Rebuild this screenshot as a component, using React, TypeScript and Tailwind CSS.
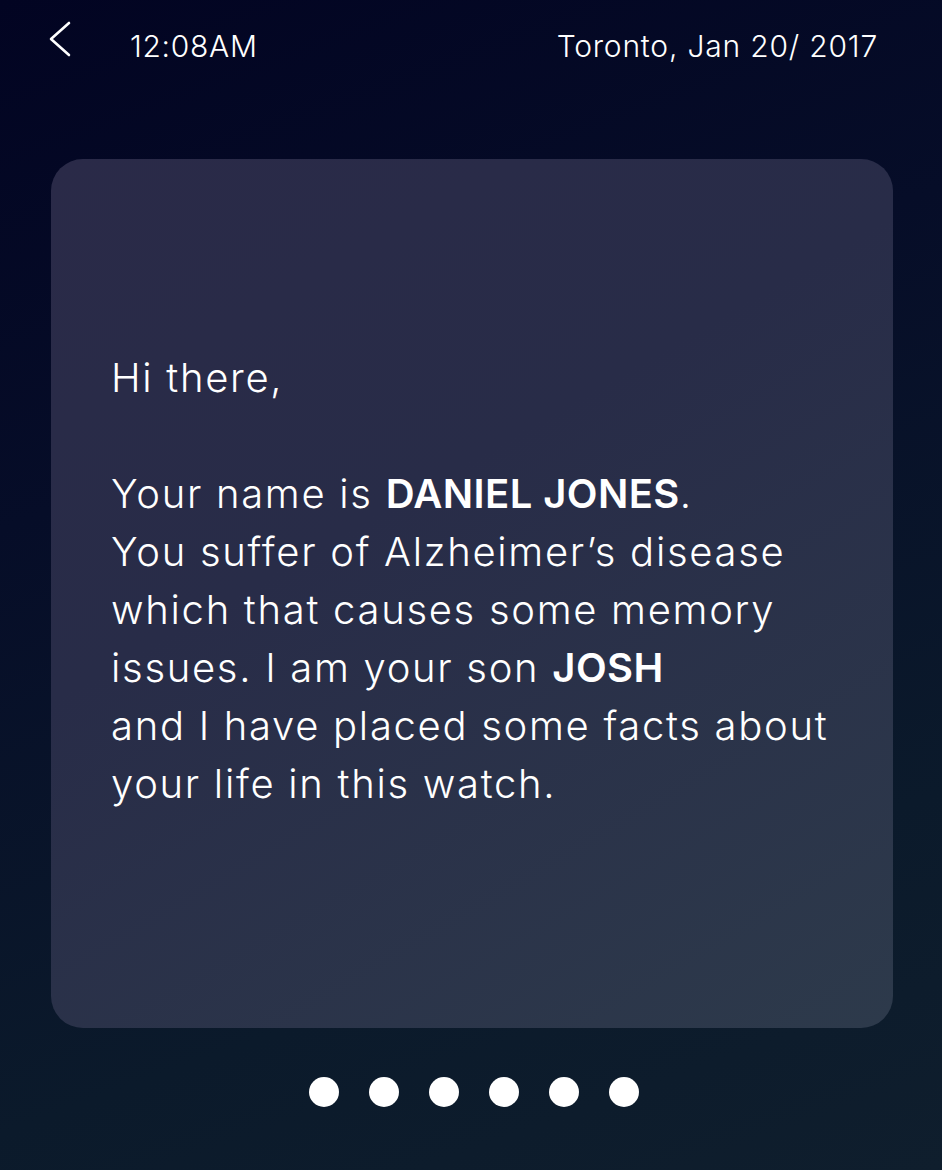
const DOTS = [0, 1, 2, 3, 4, 5];

export default function App() {
  return (
    <div className="flex h-[1170px] w-[942px] flex-col bg-[linear-gradient(160deg,#020422_0%,#060d28_35%,#0b1a2b_75%,#0f1e2d_100%)] font-['Inter',sans-serif] text-white">
      <header className="flex h-[90px] items-center pl-[48px] pr-[64px] pt-[2px]">
        <svg width="24" height="36" viewBox="0 0 24 36" className="-mt-[14px]" aria-hidden="true">
          <path d="M21 2 L3 18 L21 34" fill="none" stroke="white" strokeWidth="2.6" strokeLinecap="round" strokeLinejoin="round" />
        </svg>
        <span className="ml-[58px] text-[30px] font-light tracking-[0.7px]">12:08AM</span>
        <span className="ml-auto text-[30px] font-light tracking-[0.8px]">Toronto, Jan 20/ 2017</span>
      </header>

      <main className="ml-[51px] mr-[49px] mt-[69px] flex h-[869px] flex-col justify-center rounded-[32px] bg-[linear-gradient(150deg,#2a2a48_0%,#282c48_40%,#2d3a4b_100%)] pl-[60px] pr-[20px] pb-[26px]">
        <p className="text-[40px] font-light leading-[58px] tracking-[1.7px]">
          Hi there,
          <br />
          <br />
          Your name is <b className="font-semibold tracking-[0.4px]">DANIEL JONES</b>.
          <br />
          You suffer of Alzheimer’s disease
          <br />
          which that causes some memory
          <br />
          issues. I am your son <b className="font-semibold tracking-[0.4px]">JOSH</b>
          <br />
          and I have placed some facts about
          <br />
          your life in this watch.
        </p>
      </main>

      <div className="mt-[49px] flex justify-center gap-[30px] pl-[6px]">
        {DOTS.map((d) => (
          <span key={d} className="h-[30px] w-[30px] rounded-full bg-white" />
        ))}
      </div>
    </div>
  );
}
